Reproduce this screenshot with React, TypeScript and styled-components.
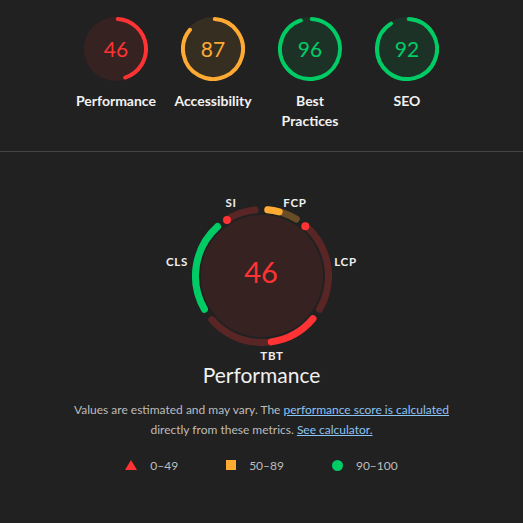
import React from 'react';
import styled, { createGlobalStyle } from 'styled-components';

const COLORS = {
  fail: '#ff3333',
  average: '#ffaa33',
  pass: '#00cc66',
};

type Rating = keyof typeof COLORS;

const FILLS: Record<Rating, string> = {
  fail: 'rgba(255,51,51,0.1)',
  average: 'rgba(255,170,51,0.1)',
  pass: 'rgba(0,204,102,0.1)',
};

const DIMS: Record<Rating, string> = {
  fail: 'rgba(255,51,51,0.26)',
  average: 'rgba(255,170,51,0.32)',
  pass: 'rgba(0,204,102,0.26)',
};

const GlobalStyle = createGlobalStyle`
  html, body {
    margin: 0;
    padding: 0;
    background: #212121;
  }
  body {
    font-family: Lato, "Noto Sans", sans-serif;
    color: #eeeeee;
  }
`;

const Page = styled.div`
  width: 523px;
  min-height: 523px;
  background: #212121;
`;

const GaugeRow = styled.div`
  display: flex;
  justify-content: center;
  padding-top: 17px;
  padding-bottom: 20px;
  border-bottom: 1px solid #444444;
`;

const GaugeItem = styled.div`
  width: 97px;
  display: flex;
  flex-direction: column;
  align-items: center;
`;

const GaugeLabel = styled.div`
  margin-top: 10px;
  width: 84px;
  height: 40px;
  font-size: 14px;
  font-weight: 700;
  line-height: 20px;
  text-align: center;
  color: #f2f2f2;
`;

const ScoreText = styled.text<{ $size: number }>`
  font-family: Lato, "Noto Sans", sans-serif;
  font-size: ${(p) => p.$size}px;
`;

const MetricLabel = styled.text`
  font-family: Lato, "Noto Sans", sans-serif;
  font-size: 11.5px;
  font-weight: 700;
  letter-spacing: 0.7px;
  fill: #f0f0f0;
`;

const PerfSection = styled.div`
  display: flex;
  flex-direction: column;
  align-items: center;
  padding-top: 34px;
`;

const Title = styled.div`
  font-size: 21px;
  line-height: 26px;
  color: #f0f0f0;
`;

const Description = styled.p`
  margin: 12px 0 0;
  font-size: 12px;
  line-height: 20px;
  text-align: center;
  color: #bdbdbd;
`;

const Link = styled.a`
  color: #8cc4f5;
  text-decoration: underline;
`;

const Legend = styled.div`
  display: flex;
  gap: 48px;
  margin-top: 15px;
  height: 20px;
  align-items: center;
`;

const LegendItem = styled.div`
  display: flex;
  align-items: center;
  gap: 13px;
  font-size: 12px;
  color: #bdbdbd;
`;

const Triangle = styled.span`
  width: 0;
  height: 0;
  border-left: 6px solid transparent;
  border-right: 6px solid transparent;
  border-bottom: 10px solid ${COLORS.fail};
`;

const Square = styled.span`
  width: 10px;
  height: 10px;
  background: ${COLORS.average};
`;

const Dot = styled.span`
  width: 11px;
  height: 11px;
  border-radius: 50%;
  background: ${COLORS.pass};
`;

function polar(cx: number, cy: number, r: number, a: number) {
  const rad = (a * Math.PI) / 180;
  return [cx + r * Math.sin(rad), cy - r * Math.cos(rad)];
}

function arcPath(cx: number, cy: number, r: number, a0: number, a1: number) {
  const [x0, y0] = polar(cx, cy, r, a0);
  const [x1, y1] = polar(cx, cy, r, a1);
  const large = a1 - a0 > 180 ? 1 : 0;
  return `M${x0.toFixed(2)} ${y0.toFixed(2)} A${r} ${r} 0 ${large} 1 ${x1.toFixed(2)} ${y1.toFixed(2)}`;
}

function rating(score: number): Rating {
  if (score < 50) return 'fail';
  if (score < 90) return 'average';
  return 'pass';
}

const SmallGauge: React.FC<{ score: number }> = ({ score }) => {
  const r = rating(score);
  const end = (score / 100) * 360 - 3.5;
  return (
    <svg width={64} height={64} viewBox="0 0 64 64">
      <circle cx={32} cy={32} r={32} fill={FILLS[r]} />
      <path
        d={arcPath(32, 32, 30, 3.5, end)}
        fill="none"
        stroke={COLORS[r]}
        strokeWidth={4}
        strokeLinecap="round"
      />
      <ScoreText $size={21} x={32} y={39.5} textAnchor="middle" fill={COLORS[r]}>
        {score}
      </ScoreText>
    </svg>
  );
};

type Segment = {
  label: string;
  base: [number, number];
  fill?: [number, number];
  dot?: number;
  rating: Rating;
  lx: number;
  ly: number;
};

const SEGMENTS: Segment[] = [
  { label: 'FCP', base: [5, 31], fill: [5, 15], rating: 'average', lx: 133, ly: 16 },
  { label: 'LCP', base: [41, 120], dot: 41, rating: 'fail', lx: 183.5, ly: 75.5 },
  { label: 'TBT', base: [130, 229], fill: [130, 172], rating: 'fail', lx: 110, ly: 169.5 },
  { label: 'CLS', base: [240, 318], fill: [240, 318], rating: 'pass', lx: 15, ly: 75.5 },
  { label: 'SI', base: [328, 354], dot: 328, rating: 'fail', lx: 69, ly: 16 },
];

const PerfGauge: React.FC<{ score: number }> = ({ score }) => {
  const cx = 100;
  const cy = 90;
  const r = 66.5;
  return (
    <svg width={200} height={176} viewBox="0 0 200 176">
      <circle cx={cx} cy={cy} r={61} fill={FILLS.fail} />
      {SEGMENTS.map((s) => (
        <g key={s.label}>
          <path
            d={arcPath(cx, cy, r, s.base[0], s.base[1])}
            fill="none"
            stroke={DIMS[s.rating]}
            strokeWidth={7}
            strokeLinecap="round"
          />
          {s.fill && (
            <path
              d={arcPath(cx, cy, r, s.fill[0], s.fill[1])}
              fill="none"
              stroke={COLORS[s.rating]}
              strokeWidth={7}
              strokeLinecap="round"
            />
          )}
          {s.dot !== undefined && (() => {
            const [dx, dy] = polar(cx, cy, 66, s.dot);
            return <circle cx={dx} cy={dy} r={4} fill={COLORS[s.rating]} />;
          })()}
          <MetricLabel x={s.lx} y={s.ly} textAnchor="middle" dominantBaseline="central">
            {s.label}
          </MetricLabel>
        </g>
      ))}
      <ScoreText $size={29} x={99} y={97} textAnchor="middle" fill={COLORS.fail}>
        {score}
      </ScoreText>
    </svg>
  );
};

const CATEGORIES = [
  { score: 46, label: 'Performance' },
  { score: 87, label: 'Accessibility' },
  { score: 96, label: 'Best Practices' },
  { score: 92, label: 'SEO' },
];

export default function App() {
  return (
    <Page>
      <GlobalStyle />
      <GaugeRow>
        {CATEGORIES.map((c) => (
          <GaugeItem key={c.label}>
            <SmallGauge score={c.score} />
            <GaugeLabel>{c.label}</GaugeLabel>
          </GaugeItem>
        ))}
      </GaugeRow>
      <PerfSection>
        <PerfGauge score={46} />
        <Title>Performance</Title>
        <Description>
          Values are estimated and may vary. The{' '}
          <Link href="#">performance score is calculated</Link>
          <br />
          directly from these metrics. <Link href="#">See calculator.</Link>
        </Description>
        <Legend>
          <LegendItem>
            <Triangle />
            <span>0–49</span>
          </LegendItem>
          <LegendItem>
            <Square />
            <span>50–89</span>
          </LegendItem>
          <LegendItem>
            <Dot />
            <span>90–100</span>
          </LegendItem>
        </Legend>
      </PerfSection>
    </Page>
  );
}
